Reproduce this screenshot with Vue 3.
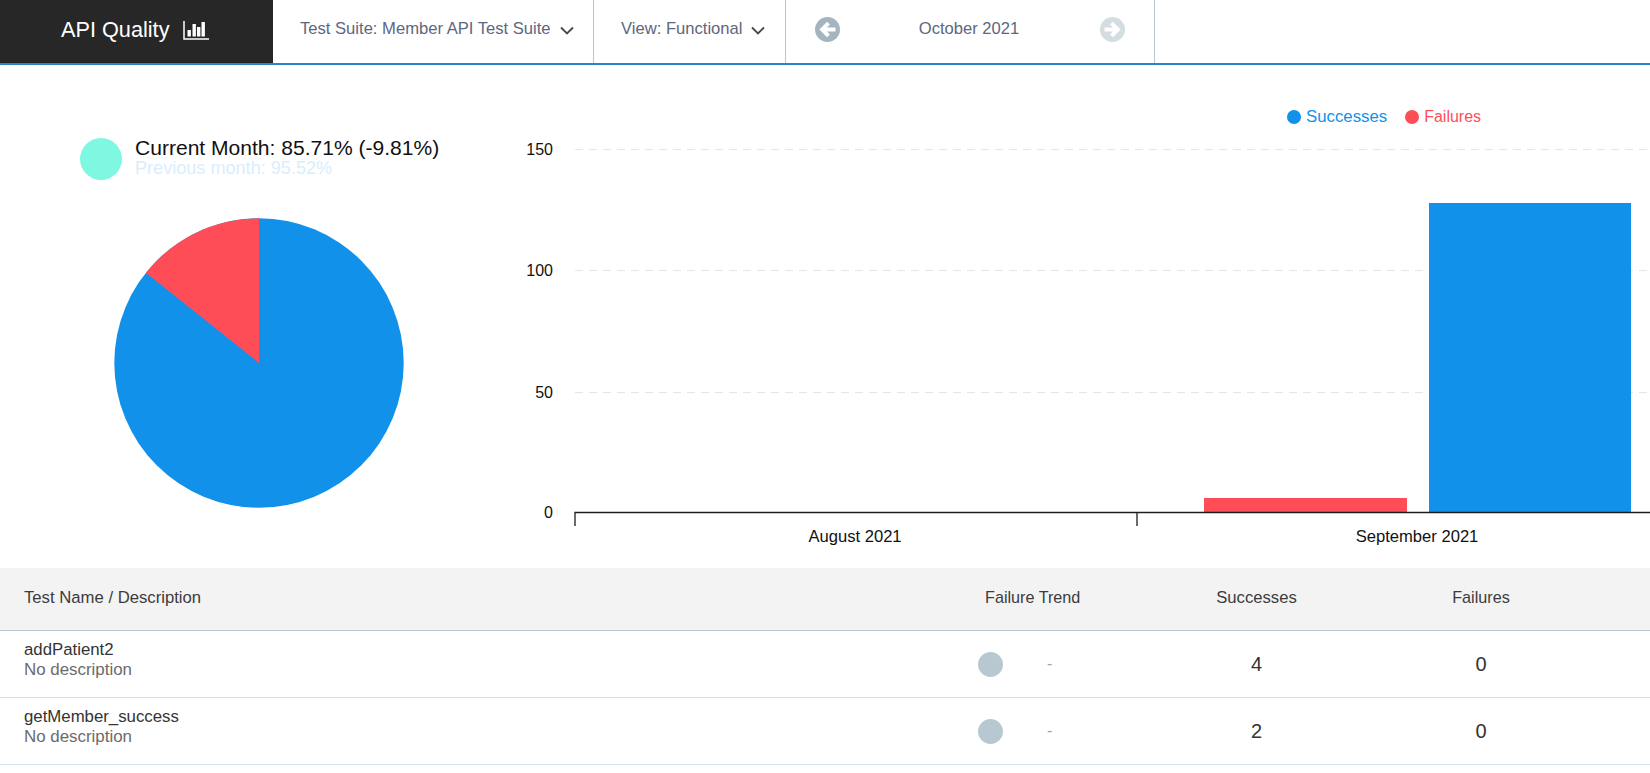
<script setup>
const gridLines = [
  { y: 149.5, label: '150' },
  { y: 270.5, label: '100' },
  { y: 392.5, label: '50' }
]
const bars = [
  { x: 1204, y: 498, w: 203, h: 15, fill: '#ff4d58' },
  { x: 1429, y: 203, w: 202, h: 310, fill: '#1191ea' }
]
const rows = [
  { name: 'addPatient2', successes: 4, failures: 0 },
  { name: 'getMember_success', successes: 2, failures: 0 }
]
</script>

<template>
  <div class="page">
    <header class="topbar">
      <div class="brand">
        <span>API Quality</span>
        <svg class="brand-icon" width="26" height="19" viewBox="0 0 26 19" fill="none">
          <path d="M1 0V18H26" stroke="#fff" stroke-width="1.5" />
          <path d="M4.5 9h3.4v6.5H4.500ZM9.500 3h3.400v12.500H9.500ZM14 6h3.400v9.500H14ZM18.500 1h3.400v14.500H18.500Z" fill="#fff" />
        </svg>
      </div>
      <div class="section suite">
        <span>Test Suite: Member API Test Suite</span>
        <svg class="chev" width="14" height="9" viewBox="0 0 14 9" fill="none">
          <path d="M1 1.500L7 7.500L13 1.500" stroke="#444a52" stroke-width="1.900" />
        </svg>
      </div>
      <div class="section view">
        <span>View: Functional</span>
        <svg class="chev" width="14" height="9" viewBox="0 0 14 9" fill="none">
          <path d="M1 1.500L7 7.500L13 1.500" stroke="#444a52" stroke-width="1.900" />
        </svg>
      </div>
      <div class="section month">
        <svg width="25" height="25" viewBox="0 0 25 25" fill="none">
          <circle cx="12.500" cy="12.500" r="12.500" fill="#a4b5bf" />
          <path d="M13.500 6.200L7.200 12.500L13.500 18.800M8 12.500H20.500" stroke="#fff" stroke-width="4" />
        </svg>
        <span class="month-label">October 2021</span>
        <svg width="25" height="25" viewBox="0 0 25 25" fill="none">
          <circle cx="12.500" cy="12.500" r="12.500" fill="#d3dde2" />
          <path d="M11.500 6.200L17.800 12.500L11.500 18.800M17 12.500H4.500" stroke="#fff" stroke-width="4" />
        </svg>
      </div>
    </header>

    <main class="charts">
      <section class="summary">
        <div class="status">
          <span class="status-dot"></span>
          <div class="status-text">
            <div class="current">Current Month: 85.71% (-9.81%)</div>
            <div class="previous">Previous month: 95.52%</div>
          </div>
        </div>
        <svg class="pie" width="290" height="290" viewBox="0 0 290 290">
          <circle cx="145" cy="145" r="144.7" fill="#1191ea" />
          <path d="M145 145L145 .3A144.7 144.7 0 0 0 31.9 54.8Z" fill="#ff4d58" />
        </svg>
      </section>

      <section class="trend">
        <div class="legend">
          <span class="legend-item success"><i></i>Successes</span>
          <span class="legend-item failure"><i></i>Failures</span>
        </div>
        <svg class="bar-chart" width="1650" height="503" viewBox="0 65 1650 503">
          <g v-for="g in gridLines" :key="g.label">
            <line x1="575" x2="1650" :y1="g.y" :y2="g.y" stroke="#e3e5e6" stroke-width="1.200" stroke-dasharray="8 6" />
            <text x="553" :y="g.y + 5" text-anchor="end" class="axis-text">{{ g.label }}</text>
          </g>
          <text x="553" y="518" text-anchor="end" class="axis-text">0</text>
          <rect v-for="b in bars" :key="b.x" :x="b.x" :y="b.y" :width="b.w" :height="b.h" :fill="b.fill" />
          <path d="M575 526V512.500H1650M1137 512.500V526" fill="none" stroke="#1c1c1c" stroke-width="1.300" />
          <text x="855" y="542" text-anchor="middle" class="axis-text small">August 2021</text>
          <text x="1417" y="542" text-anchor="middle" class="axis-text small">September 2021</text>
        </svg>
      </section>
    </main>

    <section class="table">
      <div class="grid head">
        <div>Test Name / Description</div>
        <div class="trend-head">Failure Trend</div>
        <div class="center">Successes</div>
        <div class="center fail-head">Failures</div>
      </div>
      <div v-for="r in rows" :key="r.name" class="grid row">
        <div class="info">
          <div class="name">{{ r.name }}</div>
          <div class="desc">No description</div>
        </div>
        <div class="trend-cell">
          <span class="trend-dot"></span>
          <span class="dash">-</span>
        </div>
        <div class="center num">{{ r.successes }}</div>
        <div class="center num">{{ r.failures }}</div>
      </div>
    </section>
  </div>
</template>

<style>
html, body { margin: 0; background: #fff; overflow: hidden; }
</style>

<style scoped>
.page {
  width: 1650px;
  height: 773px;
  overflow: hidden;
  font-family: "Liberation Sans", Arial, sans-serif;
}
.topbar {
  display: flex;
  height: 63px;
  border-bottom: 2px solid #2a85cb;
  box-sizing: content-box;
}
.brand {
  width: 273px;
  box-sizing: border-box;
  background: #272727;
  color: #fff;
  font-size: 21.7px;
  padding-left: 61px;
  padding-bottom: 3px;
  display: flex;
  align-items: center;
  gap: 14px;
}
.section {
  display: flex;
  align-items: center;
  box-sizing: border-box;
  height: 63px;
  padding-bottom: 5px;
  border-right: 1px solid #b4c7d6;
  color: #5d6780;
  font-size: 16.6px;
}
.suite { width: 321px; padding-left: 27px; gap: 9px; }
.view { width: 192px; padding-left: 27px; gap: 9px; }
.month {
  width: 369px;
  padding-left: 29px;
  padding-right: 29px;
  justify-content: space-between;
}
.month-label { margin-right: 2px; }
.chev { margin-top: 2px; }

.charts {
  position: relative;
  display: flex;
  height: 503px;
}
.summary {
  width: 500px;
  flex: none;
  padding: 73px 0 0 80px;
  box-sizing: border-box;
}
.status {
  display: flex;
  gap: 13px;
}
.status-dot {
  width: 42px;
  height: 42px;
  border-radius: 50%;
  background: #7ef8e1;
  flex: none;
}
.status-text { margin-top: -2px; }
.current {
  color: #111;
  font-size: 21.05px;
  line-height: 24px;
}
.previous {
  color: #d9eefd;
  font-size: 18.1px;
  line-height: 18px;
  margin-top: -1px;
}
.pie {
  display: block;
  margin: 37.5px 0 0 34px;
}
.trend {
  flex: 1;
  padding-top: 42px;
  padding-left: 787px;
}
.legend {
  display: flex;
  gap: 18px;
  font-size: 16.8px;
  line-height: 20px;
}
.legend-item {
  display: flex;
  align-items: center;
  gap: 5px;
}
.legend-item i {
  width: 14px;
  height: 14px;
  border-radius: 50%;
  background: currentColor;
}
.success { color: #1191ea; }
.failure { color: #ff4d58; font-size: 16px; }
.bar-chart {
  position: absolute;
  left: 0;
  top: 0;
  pointer-events: none;
}
.axis-text {
  font-size: 16px;
  fill: #111;
}
.axis-text.small { font-size: 16.6px; }

.table { color: #333; }
.grid {
  display: grid;
  grid-template-columns: 954px 168px 221px 228px 1fr;
  padding-left: 24px;
  align-items: center;
  box-sizing: border-box;
}
.head {
  height: 63px;
  background: #f3f3f3;
  border-bottom: 1px solid #b9c8d6;
  font-size: 16.7px;
  padding-bottom: 3px;
  color: #3c3c3c;
}
.trend-head { padding-left: 7px; font-size: 16.2px; }
.fail-head { font-size: 16.2px; }
.row {
  height: 67px;
  border-bottom: 1px solid #d5e1ea;
}
.info { padding-bottom: 10px; }
.name {
  font-size: 16.8px;
  line-height: 20px;
  color: #333;
}
.desc {
  font-size: 16.9px;
  line-height: 19px;
  color: #6b6b6b;
}
.center { text-align: center; }
.num { font-size: 20px; color: #333; }
.trend-cell {
  display: flex;
  align-items: center;
  gap: 44px;
}
.trend-dot {
  width: 25px;
  height: 25px;
  border-radius: 50%;
  background: #b8c8d0;
}
.dash { color: #9aa6ac; font-size: 16px; }
</style>
